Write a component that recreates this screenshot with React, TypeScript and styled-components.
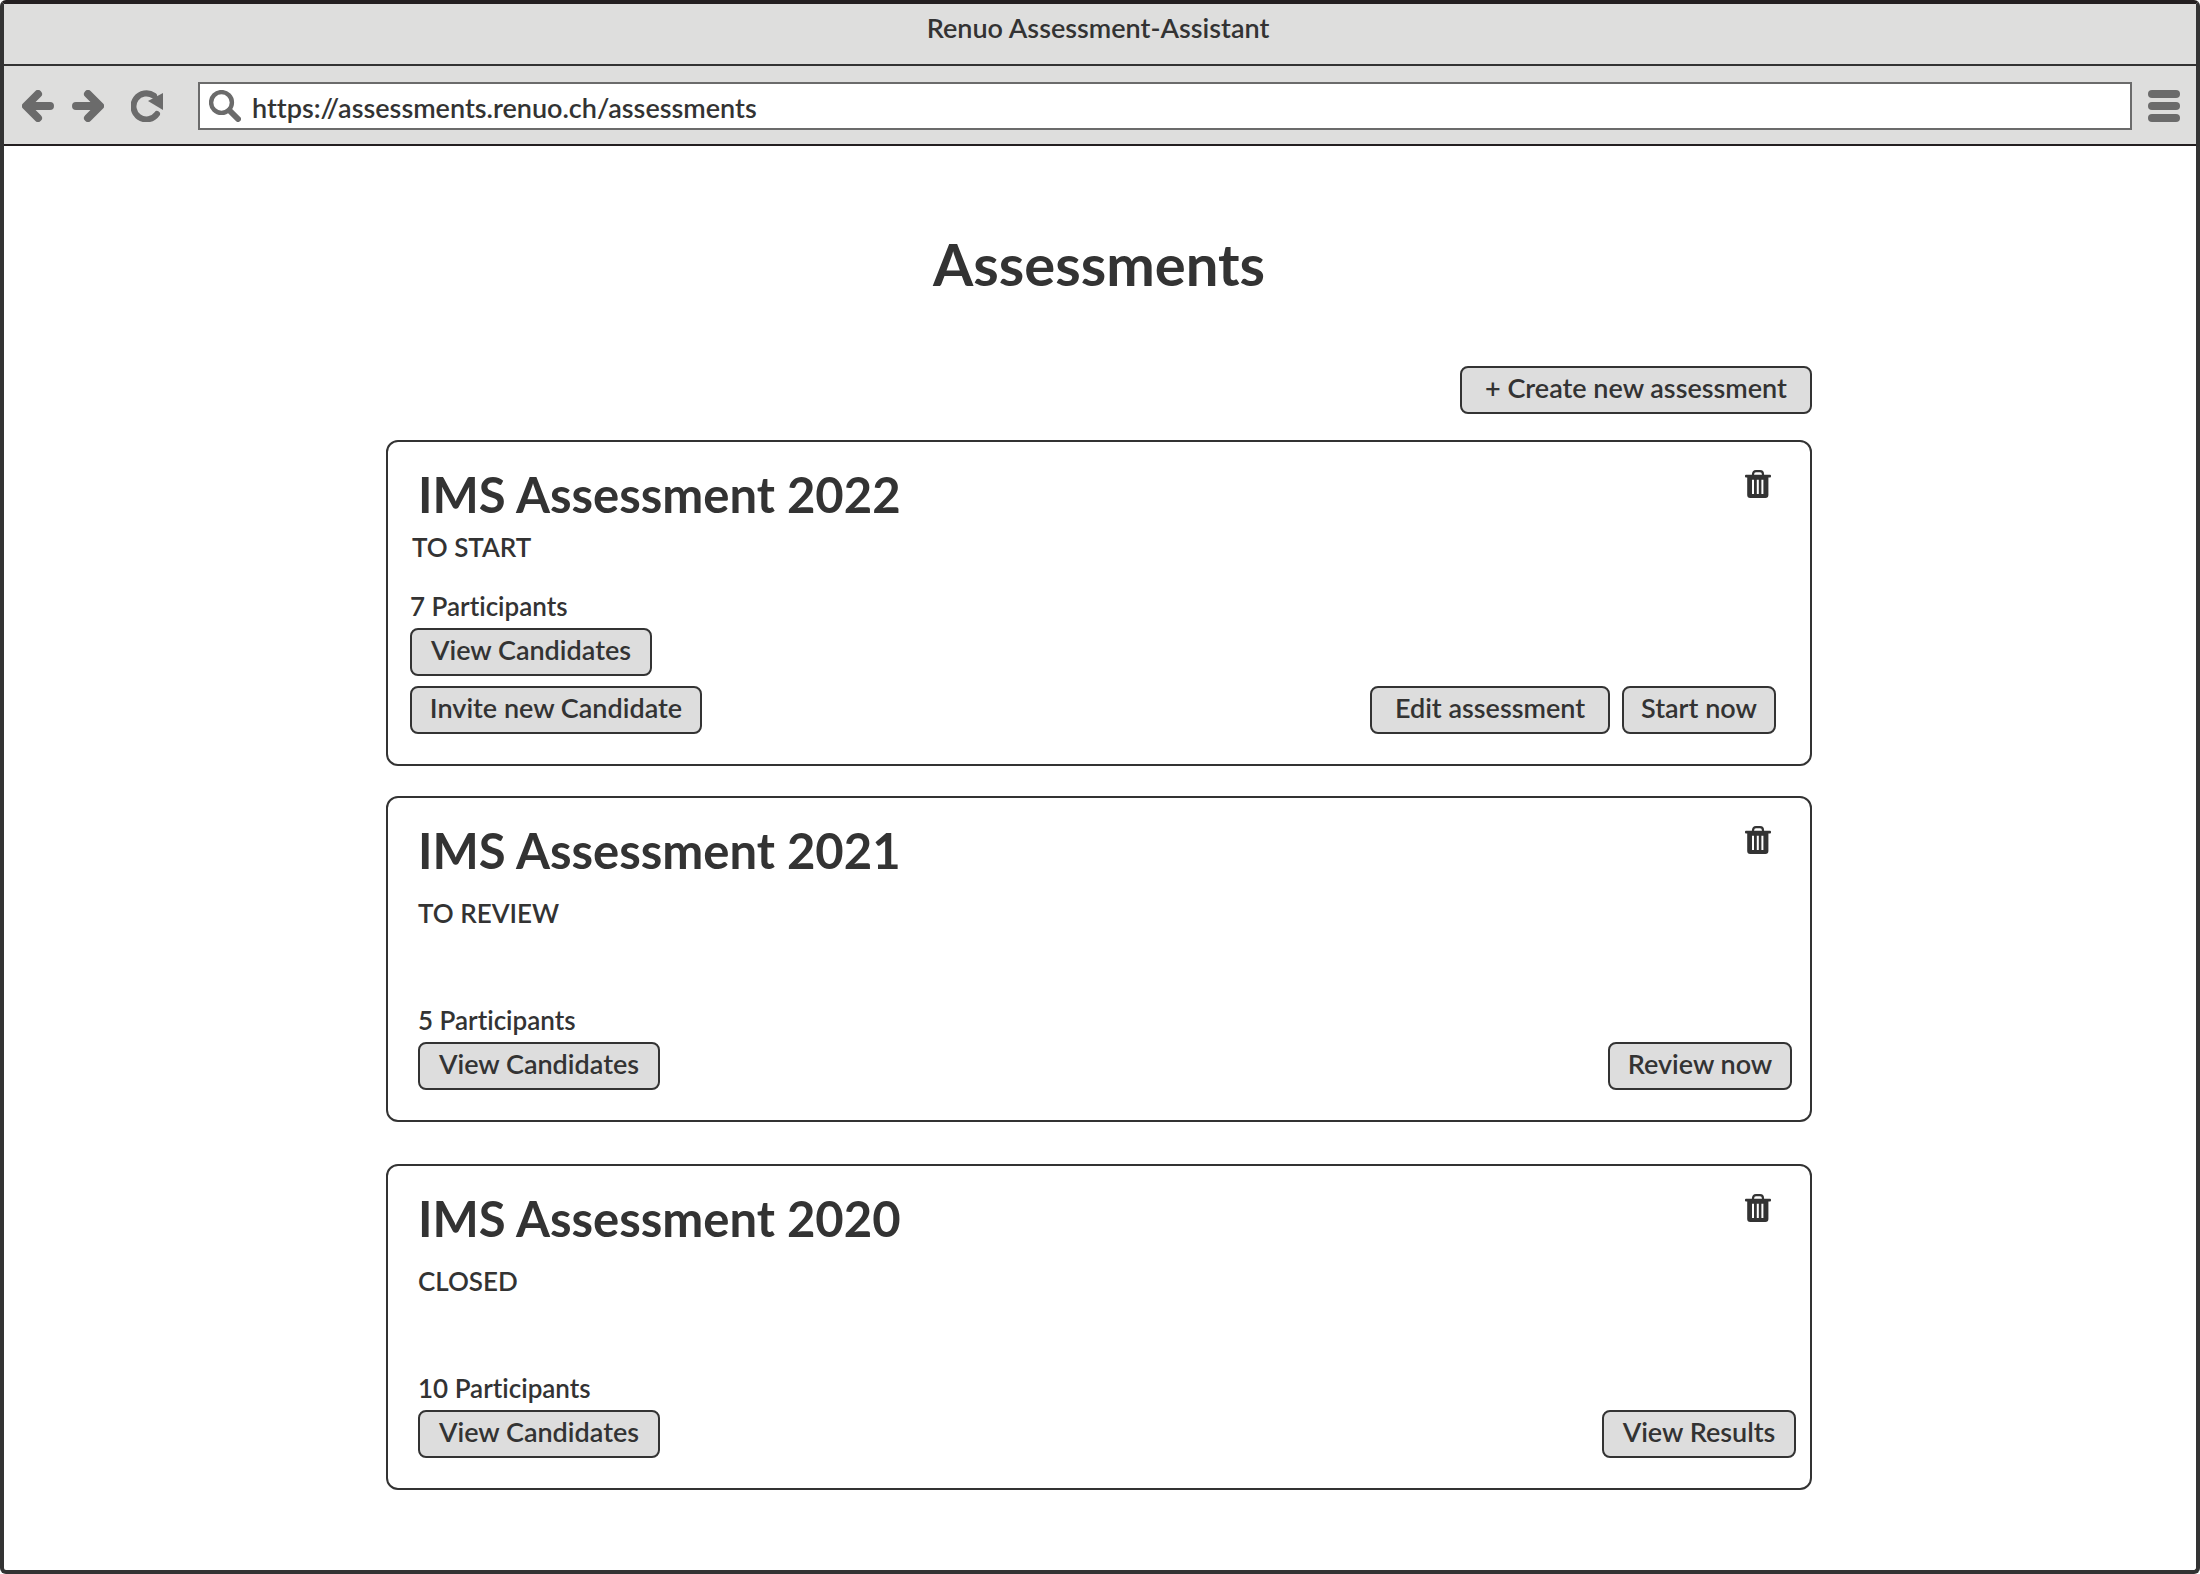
import React, { useState } from "react";
import styled, { createGlobalStyle } from "styled-components";

const ink = "#333333";
const frame = "#231f20";
const chrome = "#dededd";
const control = "#6b6b6b";
const fill = "#dddddd";

const GlobalStyle = createGlobalStyle`
  * { box-sizing: border-box; }
  body {
    margin: 0;
    background: #ffffff;
    color: ${ink};
    font-family: Lato, "Open Sans", sans-serif;
    font-size: 27px;
    font-weight: 600;
    font-variant-ligatures: none;
    line-height: 32px;
  }
  button, input { font: inherit; font-variant-ligatures: none; color: inherit; }
  h1, h2, p { margin: 0; }
`;

const Window = styled.div`
  display: flex;
  flex-direction: column;
  min-height: 100vh;
  border: 4px solid ${ink};
  border-top-color: ${frame};
  border-radius: 6px;
`;

const TitleBar = styled.header`
  height: 62px;
  padding: 8px 4px 0 0;
  background: ${chrome};
  border-bottom: 2px solid ${ink};
  text-align: center;
`;

const Toolbar = styled.nav`
  display: flex;
  align-items: center;
  height: 80px;
  padding: 2px 16px 0 18px;
  background: ${chrome};
  border-bottom: 2px solid ${frame};
`;

const ToolButton = styled.button<{ $after?: number }>`
  display: flex;
  flex: none;
  width: 32px;
  height: 32px;
  margin-right: ${(p) => p.$after ?? 0}px;
  padding: 0;
  border: 0;
  background: none;
  color: ${control};
  cursor: pointer;
`;

const AddressBar = styled.label`
  display: flex;
  flex: 1;
  align-items: center;
  gap: 11px;
  height: 48px;
  margin-right: 16px;
  padding-left: 9px;
  background: #ffffff;
  border: 2px solid ${control};
  color: ${control};
`;

const AddressInput = styled.input`
  flex: 1;
  min-width: 0;
  height: 36px;
  padding: 2px 0 0;
  border: 0;
  outline: 0;
  background: none;
  color: ${ink};
`;

const Page = styled.main`
  display: flex;
  justify-content: center;
  padding: 82px 2px 80px 0;
`;

const Column = styled.div`
  flex: 1;
  max-width: 1426px;
`;

const PageTitle = styled.h1`
  font-size: 58px;
  font-weight: 700;
  line-height: 72px;
  text-align: center;
`;

const Actions = styled.div`
  display: flex;
  justify-content: flex-end;
  margin: 66px 0 26px;
`;

const Button = styled.button<{ $width: number }>`
  min-width: ${(p) => p.$width}px;
  height: 48px;
  padding: 0 0 4px;
  background: ${fill};
  border: 2px solid ${ink};
  border-radius: 8px;
  white-space: nowrap;
  cursor: pointer;
`;

const Card = styled.article<{ $after: number }>`
  display: flex;
  flex-direction: column;
  min-height: 326px;
  margin-bottom: ${(p) => p.$after}px;
  padding: 24px 0 30px;
  border: 2px solid ${ink};
  border-radius: 12px;
`;

const CardHeader = styled.div`
  display: flex;
  justify-content: space-between;
  align-items: flex-start;
  padding: 0 39px 0 30px;
`;

const CardTitle = styled.h2`
  font-size: 49px;
  font-weight: 700;
  line-height: 56px;
`;

const DeleteButton = styled.button`
  display: flex;
  margin-top: 4px;
  padding: 0;
  border: 0;
  background: none;
  cursor: pointer;
`;

const Status = styled.p<{ $inset: number; $gap: number }>`
  margin-top: ${(p) => p.$gap}px;
  padding-left: ${(p) => p.$inset}px;
  font-size: 26px;
`;

const CardFooter = styled.div<{ $left: number; $right: number }>`
  display: flex;
  justify-content: space-between;
  align-items: flex-end;
  margin-top: auto;
  padding: 0 ${(p) => p.$right}px 0 ${(p) => p.$left}px;
`;

const Candidates = styled.div`
  display: flex;
  flex-direction: column;
  align-items: flex-start;
  gap: 10px;
`;

const Participants = styled.p`
  margin-bottom: -4px;
  font-size: 26px;
`;

const ButtonRow = styled.div`
  display: flex;
  gap: 12px;
`;

const BackIcon = () => (
  <svg width="32" height="32" viewBox="0 0 32 32" fill="none" stroke="currentColor" strokeWidth="8" strokeLinecap="round" strokeLinejoin="round">
    <path d="M16 4 L4 16 L16 28 M5 16 H28" />
  </svg>
);

const ForwardIcon = () => (
  <svg width="32" height="32" viewBox="0 0 32 32" fill="none" stroke="currentColor" strokeWidth="8" strokeLinecap="round" strokeLinejoin="round">
    <path d="M16 4 L28 16 L16 28 M27 16 H4" />
  </svg>
);

const ReloadIcon = () => (
  <svg width="32" height="32" viewBox="0 0 32 32" fill="none">
    <path d="M23 5.8 A13 13 0 1 0 26 24" stroke="currentColor" strokeWidth="6" strokeLinecap="round" />
    <path d="M32 3 V20 L17 11 Z" fill="currentColor" />
  </svg>
);

const SearchIcon = () => (
  <svg width="32" height="32" viewBox="0 0 32 32" fill="none" stroke="currentColor" strokeLinecap="round">
    <circle cx="12.5" cy="12.5" r="10.4" strokeWidth="4.4" />
    <path d="M20.5 20.5 L29 29" strokeWidth="6" />
  </svg>
);

const MenuIcon = () => (
  <svg width="32" height="32" viewBox="0 0 32 32" fill="currentColor">
    <rect width="32" height="8" rx="4" />
    <rect y="12" width="32" height="8" rx="4" />
    <rect y="24" width="32" height="8" rx="4" />
  </svg>
);

const TrashIcon = () => (
  <svg width="26" height="28" viewBox="0 0 26 28" fill={ink}>
    <path d="M8 5.5 V4.5 Q8 1.2 11 1.2 H15 Q18 1.2 18 4.5 V5.5" fill="none" stroke={ink} strokeWidth="2.2" />
    <rect y="4.8" width="26" height="2.6" rx="1" />
    <path
      fillRule="evenodd"
      d="M2.2 6 H23.4 V25 Q23.4 28 20.4 28 H5.2 Q2.2 28 2.2 25 Z M7 9.7 V24 H9 V9.7 Z M11.8 9.7 V24 H13.8 V9.7 Z M16.4 9.7 V24 H18.4 V9.7 Z"
    />
  </svg>
);

type Action = { label: string; width: number };

type Assessment = {
  title: string;
  status: string;
  statusInset: number;
  statusGap: number;
  participants: number;
  left: number;
  right: number;
  after: number;
  candidateActions: Action[];
  actions: Action[];
};

const assessments: Assessment[] = [
  {
    title: "IMS Assessment 2022",
    status: "TO START",
    statusInset: 24,
    statusGap: 9,
    participants: 7,
    left: 22,
    right: 34,
    after: 30,
    candidateActions: [
      { label: "View Candidates", width: 242 },
      { label: "Invite new Candidate", width: 292 },
    ],
    actions: [
      { label: "Edit assessment", width: 240 },
      { label: "Start now", width: 154 },
    ],
  },
  {
    title: "IMS Assessment 2021",
    status: "TO REVIEW",
    statusInset: 30,
    statusGap: 19,
    participants: 5,
    left: 30,
    right: 18,
    after: 42,
    candidateActions: [{ label: "View Candidates", width: 242 }],
    actions: [{ label: "Review now", width: 184 }],
  },
  {
    title: "IMS Assessment 2020",
    status: "CLOSED",
    statusInset: 30,
    statusGap: 19,
    participants: 10,
    left: 30,
    right: 14,
    after: 0,
    candidateActions: [{ label: "View Candidates", width: 242 }],
    actions: [{ label: "View Results", width: 194 }],
  },
];

export default function App() {
  const [url, setUrl] = useState("https://assessments.renuo.ch/assessments");

  return (
    <>
      <GlobalStyle />
      <Window>
        <TitleBar>Renuo Assessment-Assistant</TitleBar>
        <Toolbar>
          <ToolButton aria-label="Back" $after={18}><BackIcon /></ToolButton>
          <ToolButton aria-label="Forward" $after={27}><ForwardIcon /></ToolButton>
          <ToolButton aria-label="Reload" $after={35}><ReloadIcon /></ToolButton>
          <AddressBar>
            <SearchIcon />
            <AddressInput aria-label="Address" value={url} onChange={(e) => setUrl(e.target.value)} />
          </AddressBar>
          <ToolButton aria-label="Menu"><MenuIcon /></ToolButton>
        </Toolbar>
        <Page>
          <Column>
            <PageTitle>Assessments</PageTitle>
            <Actions>
              <Button $width={352}>+ Create new assessment</Button>
            </Actions>
            {assessments.map((a) => (
              <Card key={a.title} $after={a.after}>
                <CardHeader>
                  <CardTitle>{a.title}</CardTitle>
                  <DeleteButton aria-label={`Delete ${a.title}`}><TrashIcon /></DeleteButton>
                </CardHeader>
                <Status $inset={a.statusInset} $gap={a.statusGap}>{a.status}</Status>
                <CardFooter $left={a.left} $right={a.right}>
                  <Candidates>
                    <Participants>{a.participants} Participants</Participants>
                    {a.candidateActions.map((b) => (
                      <Button key={b.label} $width={b.width}>{b.label}</Button>
                    ))}
                  </Candidates>
                  <ButtonRow>
                    {a.actions.map((b) => (
                      <Button key={b.label} $width={b.width}>{b.label}</Button>
                    ))}
                  </ButtonRow>
                </CardFooter>
              </Card>
            ))}
          </Column>
        </Page>
      </Window>
    </>
  );
}
